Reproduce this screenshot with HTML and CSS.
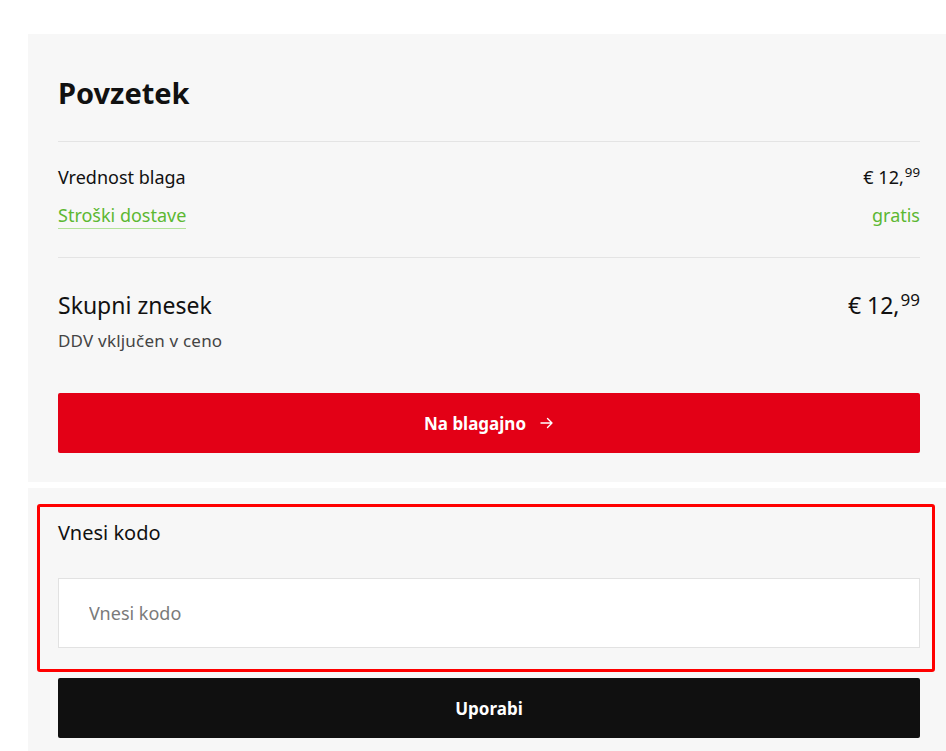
FILE: index.html
```html
<!DOCTYPE html>
<html lang="sl">
<head>
<meta charset="utf-8">
<title>Povzetek</title>
<link rel="stylesheet" href="styles.css">
</head>
<body>
<div class="page">
  <section class="panel summary">
    <h1 class="title">Povzetek</h1>
    <div class="rows">
      <div class="row">
        <span class="label">Vrednost blaga</span>
        <span class="price">€ 12,<sup>99</sup></span>
      </div>
      <div class="row">
        <span class="label green link">Stroški dostave</span>
        <span class="value green">gratis</span>
      </div>
    </div>
    <div class="total">
      <div class="row">
        <span class="total-label">Skupni znesek</span>
        <span class="total-price">€ 12,<sup>99</sup></span>
      </div>
      <div class="vat">DDV vključen v ceno</div>
    </div>
    <button class="btn btn-red">Na blagajno
      <svg class="arrow" width="14" height="12" viewBox="0 0 14 12" fill="none" stroke="#fff" stroke-width="1.4" stroke-linecap="round" stroke-linejoin="round"><path d="M1 6h11M7.5 1.5 12 6l-4.5 4.5"/></svg>
    </button>
  </section>
  <section class="panel code">
    <div class="code-box">
      <h2 class="code-title">Vnesi kodo</h2>
      <input class="code-input" type="text" placeholder="Vnesi kodo">
    </div>
    <button class="btn btn-black">Uporabi</button>
    <div class="highlight"></div>
  </section>
</div>
</body>
</html>
```
FILE: styles.css
```css
html, body {
  margin: 0;
  padding: 0;
  background: #fff;
  overflow: hidden;
}
body {
  font-family: "Noto Sans", "Open Sans", sans-serif;
  color: #111;
  width: 946px;
  height: 751px;
}
.page {
  padding: 34px 0 0 28px;
  width: 950px;
  display: flex;
  flex-direction: column;
  gap: 6px;
}
.panel {
  background: #f7f7f7;
  padding: 0 30px;
  width: 862px;
  position: relative;
}
.summary {
  padding-top: 42px;
  padding-bottom: 29px;
}
.title {
  margin: 0;
  font-size: 29px;
  font-weight: 700;
  line-height: 34px;
  padding-bottom: 31px;
  border-bottom: 1px solid #e4e4e4;
}
.rows {
  padding: 23px 0 28px;
  display: flex;
  flex-direction: column;
  gap: 14px;
  border-bottom: 1px solid #e4e4e4;
}
.row {
  display: flex;
  justify-content: space-between;
  align-items: baseline;
}
.label, .price, .value {
  font-size: 18px;
  line-height: 24px;
}
.price sup, .total-price sup {
  font-size: 0.74em;
  vertical-align: 0;
  position: relative;
  top: -0.5em;
  line-height: 0;
  margin-left: 1px;
}
.green {
  color: #5cb832;
}
.link {
  border-bottom: 1px solid #b3e39a;
  padding-bottom: 1px;
}
.total {
  padding-top: 32px;
}
.total-label {
  font-size: 23px;
  line-height: 30px;
}
.total-price {
  font-size: 23px;
  line-height: 30px;
}
.vat {
  margin-top: 9px;
  font-size: 17px;
  letter-spacing: 0.2px;
  line-height: 24px;
  color: #444;
}
.btn {
  display: flex;
  align-items: center;
  justify-content: center;
  gap: 14px;
  width: 100%;
  height: 60px;
  border: 0;
  border-radius: 2px;
  font-family: inherit;
  font-size: 17px;
  font-weight: 700;
  color: #fff;
  cursor: pointer;
}
.btn-red {
  margin-top: 40px;
  background: #e30016;
}
.btn-black {
  background: #101010;
}
.code {
  padding-top: 30px;
  padding-bottom: 20px;
}
.code-box {
  padding-bottom: 30px;
}
.code-title {
  margin: 0 0 30px;
  font-size: 20px;
  font-weight: 400;
  line-height: 30px;
}
.code-input {
  display: block;
  box-sizing: border-box;
  width: 100%;
  height: 70px;
  border: 1px solid #e2e2e2;
  background: #fff;
  padding: 0 30px;
  font-family: inherit;
  font-size: 18px;
  color: #111;
  outline: none;
}
.code-input::placeholder {
  color: #7a7a7a;
}
.highlight {
  position: absolute;
  left: 9px;
  top: 16px;
  width: 892px;
  height: 162px;
  border: 3px solid #ff0000;
  border-radius: 3px;
  pointer-events: none;
}
```
